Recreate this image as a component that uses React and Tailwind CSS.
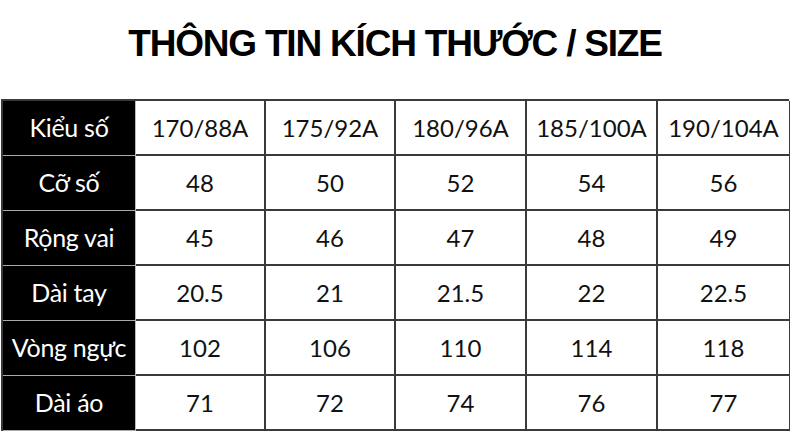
import React from "react";

const heads = ["Kiểu số", "Cỡ số", "Rộng vai", "Dài tay", "Vòng ngực", "Dài áo"];
const data = [
  ["170/88A", "175/92A", "180/96A", "185/100A", "190/104A"],
  ["48", "50", "52", "54", "56"],
  ["45", "46", "47", "48", "49"],
  ["20.5", "21", "21.5", "22", "22.5"],
  ["102", "106", "110", "114", "118"],
  ["71", "72", "74", "76", "77"],
];

export default function App() {
  return (
    <div className="w-[790px] h-[431px] bg-white overflow-hidden">
      <div className="h-[99px] flex items-start justify-center pt-[22px]">
        <h1
          className="text-[37px] leading-[44px] font-bold text-black tracking-[-1.2px]"
          style={{ fontFamily: '"Liberation Sans", Arial, sans-serif' }}
        >
          THÔNG TIN KÍCH THƯỚC / SIZE
        </h1>
      </div>
      <div
        className="ml-[1px] w-[788px] grid grid-cols-[133px_130px_130px_131px_131px_133px] border-t-2 border-l-2 border-[#3a3a3a]"
        style={{ fontFamily: 'Lato, "Open Sans", sans-serif' }}
      >
        {heads.map((h, r) => (
          <React.Fragment key={h}>
            <div className="h-[55px] bg-black text-white flex items-center justify-center text-[25px] tracking-[-0.3px] border-r border-r-[#bbbbbb] border-b border-b-[#aaaaaa]">
              {h}
            </div>
            {data[r].map((v, c) => (
              <div
                key={c}
                className="h-[55px] bg-white text-[#111] flex items-center justify-center text-[24px] border-r-2 border-b-2 border-[#3a3a3a]"
              >
                {v}
              </div>
            ))}
          </React.Fragment>
        ))}
      </div>
    </div>
  );
}
